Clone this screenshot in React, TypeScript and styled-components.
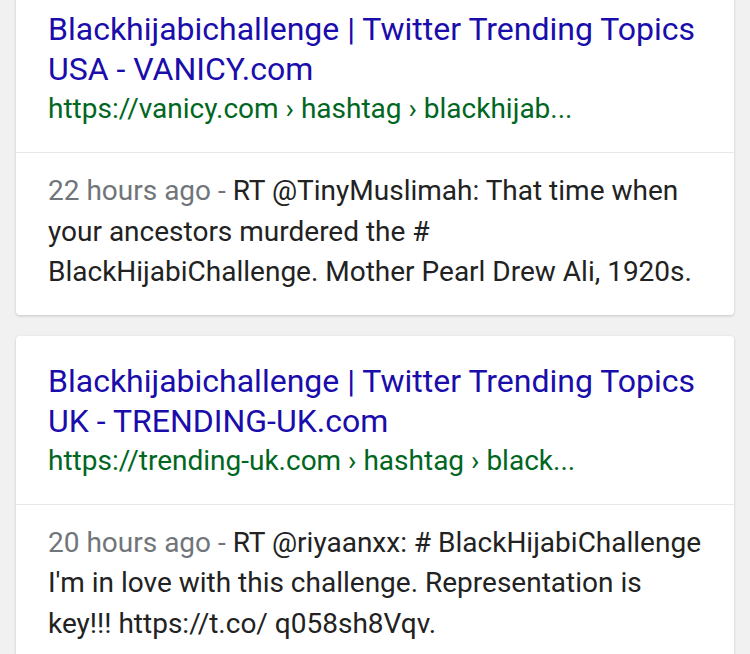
import React from "react";
import styled, { createGlobalStyle } from "styled-components";

const GlobalStyle = createGlobalStyle`
  html, body {
    margin: 0;
    padding: 0;
    background: #f1f1f1;
    font-family: Roboto, "Noto Sans", Arial, sans-serif;
  }
`;

const Page = styled.div`
  height: 654px;
  overflow: hidden;
  padding: 0 16px;
`;

const List = styled.div`
  display: flex;
  flex-direction: column;
  gap: 21px;
  margin-top: -16px;
`;

const Card = styled.div`
  background: #fff;
  border-radius: 4px;
  box-shadow: 0 1px 3px rgba(0, 0, 0, 0.18);
`;

const Head = styled.div`
  padding: 25px 32px 23px;
  border-bottom: 1px solid #e8e8e8;
`;

const Title = styled.div`
  color: #1a0dab;
  font-size: 32px;
  line-height: 40px;
  white-space: nowrap;
`;

const Url = styled.div`
  color: #006621;
  font-size: 28px;
  line-height: 40px;
  white-space: nowrap;
`;

const Body = styled.div`
  padding: 18px 32px 22px;
  color: #222;
  font-size: 28px;
  line-height: 40.5px;
  white-space: nowrap;
`;

const Time = styled.span`
  color: #70757a;
`;

interface Result {
  title: string[];
  url: string;
  time: string;
  text: string[];
}

const results: Result[] = [
  {
    title: ["Blackhijabichallenge | Twitter Trending Topics", "USA - VANICY.com"],
    url: "https://vanicy.com › hashtag › blackhijab...",
    time: "22 hours ago - ",
    text: [
      "RT @TinyMuslimah: That time when",
      "your ancestors murdered the #",
      "BlackHijabiChallenge. Mother Pearl Drew Ali, 1920s.",
    ],
  },
  {
    title: ["Blackhijabichallenge | Twitter Trending Topics", "UK - TRENDING-UK.com"],
    url: "https://trending-uk.com › hashtag › black...",
    time: "20 hours ago - ",
    text: [
      "RT @riyaanxx: # BlackHijabiChallenge",
      "I'm in love with this challenge. Representation is",
      "key!!! https://t.co/ q058sh8Vqv.",
    ],
  },
];

const App: React.FunctionComponent<{}> = () => {
  return (
    <Page>
      <GlobalStyle />
      <List>
        {results.map((r, i) => (
          <Card key={i}>
            <Head>
              {r.title.map((t, j) => (
                <Title key={j}>{t}</Title>
              ))}
              <Url>{r.url}</Url>
            </Head>
            <Body>
              <Time>{r.time}</Time>
              {r.text[0]}
              <br />
              {r.text[1]}
              <br />
              {r.text[2]}
            </Body>
          </Card>
        ))}
      </List>
    </Page>
  );
};

export default App;
